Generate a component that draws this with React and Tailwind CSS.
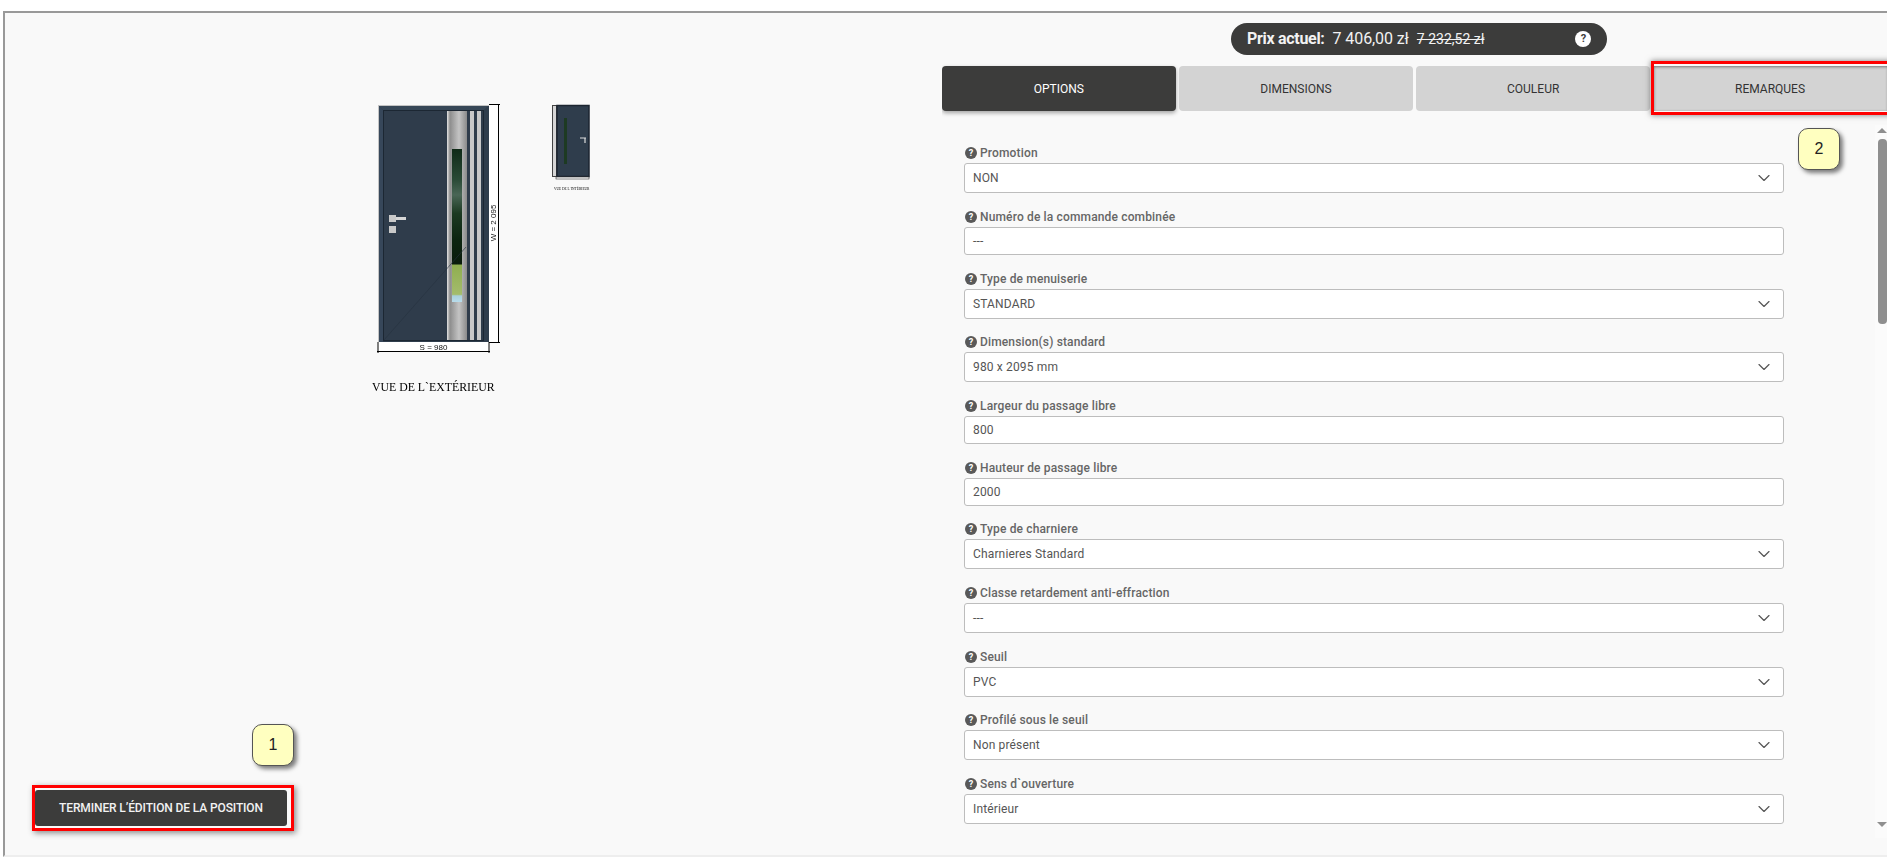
import React from 'react';
import { ChevronDown } from 'lucide-react';

const fields = [
  { label: 'Promotion', value: 'NON', select: true, mb: 'mb-[14px]' },
  { label: 'Numéro de la commande combinée', value: '---', mb: 'mb-[14px]' },
  { label: 'Type de menuiserie', value: 'STANDARD', select: true, mb: 'mb-[13px]' },
  { label: 'Dimension(s) standard', value: '980 x 2095 mm', select: true, mb: 'mb-[14px]' },
  { label: 'Largeur du passage libre', value: '800', mb: 'mb-[14px]' },
  { label: 'Hauteur de passage libre', value: '2000', mb: 'mb-[13px]' },
  { label: 'Type de charniere', value: 'Charnieres Standard', select: true, mb: 'mb-[14px]' },
  { label: 'Classe retardement anti-effraction', value: '---', select: true, mb: 'mb-[14px]' },
  { label: 'Seuil', value: 'PVC', select: true, mb: 'mb-[13px]' },
  { label: 'Profilé sous le seuil', value: 'Non présent', select: true, mb: 'mb-[14px]' },
  { label: 'Sens d`ouverture', value: 'Intérieur', select: true, mb: 'mb-0' },
];

function HelpIcon() {
  return (
    <span className="ml-px flex h-3 w-3 items-center justify-center rounded-full bg-[#595959] text-[9px] font-bold leading-none text-white">?</span>
  );
}

function Field({ label, value, select, mb }) {
  return (
    <div className={mb}>
      <div className="flex h-5 items-center gap-[3px] text-xs font-medium tracking-[0.15px] text-[#666]">
        <HelpIcon />
        <span>{label}</span>
      </div>
      <div className={`flex items-center justify-between rounded-[3px] border border-[#bdbdbd] bg-white pl-2 pr-[9px] text-xs tracking-[0.15px] text-[#555] ${select ? 'h-[30px]' : 'h-[28px]'}`}>
        <span>{value}</span>
        {select && <ChevronDown size={20} strokeWidth={1.4} className="text-[#555]" />}
      </div>
    </div>
  );
}

function Callout({ children, className }) {
  return (
    <div className={`absolute flex h-[42px] w-[42px] items-center justify-center rounded-[10px] border border-[#555] bg-[#ffffc0] font-['Liberation_Sans',sans-serif] text-base text-[#222] shadow-[3px_3px_4px_rgba(0,0,0,0.5)] ${className}`}>
      {children}
    </div>
  );
}

function DoorDrawing() {
  return (
    <svg width="240" height="300" viewBox="370 100 240 300" className="block blur-[0.4px]">
      <defs>
        <linearGradient id="steel" x1="0" x2="1" y1="0" y2="0">
          <stop offset="0" stopColor="#e4e4e4" />
          <stop offset="0.15" stopColor="#8d8d8d" />
          <stop offset="0.6" stopColor="#c4c4c4" />
          <stop offset="1" stopColor="#8a8a8a" />
        </linearGradient>
        <linearGradient id="glass" x1="0" x2="0" y1="0" y2="1">
          <stop offset="0" stopColor="#0f2a17" />
          <stop offset="0.2" stopColor="#2a4a36" />
          <stop offset="0.3" stopColor="#4a6656" />
          <stop offset="0.42" stopColor="#1c3a22" />
          <stop offset="0.6" stopColor="#0c2410" />
          <stop offset="0.75" stopColor="#0a1c0c" />
          <stop offset="0.76" stopColor="#8fae50" />
          <stop offset="0.95" stopColor="#a4bc6c" />
          <stop offset="0.96" stopColor="#a9d0dc" />
          <stop offset="1" stopColor="#b8dcec" />
        </linearGradient>
      </defs>

      {/* main door */}
      <rect x="378" y="105" width="111" height="237" fill="#2f3d4c" />
      <path d="M378 105H489L484 110H383Z" fill="#374757" />
      <path d="M378 105V342H383V110Z" fill="#37475a" />
      <rect x="378" y="105" width="111" height="1" fill="#c4c4c4" />
      <rect x="378" y="105" width="1" height="237" fill="#c4c4c4" />
      <rect x="383.500" y="110.500" width="100" height="230" fill="#2f3c4b" stroke="#1c2733" strokeWidth="1" />
      <rect x="447" y="111" width="20" height="229" fill="url(#steel)" />
      <rect x="470" y="111" width="4" height="229" fill="#c8c8c8" />
      <rect x="477" y="111" width="4" height="229" fill="#c8c8c8" />
      <rect x="452" y="149" width="10" height="153" fill="url(#glass)" />
      <line x1="384" y1="340" x2="466" y2="247" stroke="#263240" strokeWidth="0.6" />
      <rect x="389" y="215" width="7" height="7" fill="#c9c9c9" />
      <rect x="396" y="217" width="10" height="3" fill="#d6d6d6" />
      <rect x="389" y="226" width="7" height="7" fill="#c9c9c9" />

      {/* dimensions */}
      <rect x="489" y="105" width="9" height="237" fill="#fff" />
      <rect x="378" y="342" width="111" height="9" fill="#fff" />
      <path d="M489 104.500H500M498.500 104V343M489 342.500H500M377 351.500H490M378 342V353M489 342V353" stroke="#000" strokeWidth="1" fill="none" />
      <text x="433.500" y="350" textAnchor="middle" fontFamily="Liberation Sans, sans-serif" fontSize="8" fill="#111">S = 980</text>
      <text transform="translate(496 223) rotate(-90)" textAnchor="middle" fontFamily="Liberation Sans, sans-serif" fontSize="8" fill="#111">W = 2 095</text>
      <text x="372" y="391" fontFamily="Liberation Serif, serif" fontSize="11.800" fill="#000">VUE DE L`EXTÉRIEUR</text>

      {/* small door */}
      <rect x="552.500" y="105.500" width="4" height="71" fill="#d6d6d6" stroke="#444" strokeWidth="1" />
      <rect x="557" y="105.500" width="32" height="71" fill="#2f3d4c" stroke="#1c2530" strokeWidth="1.500" />
      <rect x="564" y="118" width="3" height="46" fill="#1d3a22" />
      <path d="M580 138H586M585 138V143" stroke="#ddd" strokeWidth="1.200" fill="none" />
      <rect x="556" y="177" width="33" height="2" fill="#fff" stroke="#333" strokeWidth="0.6" />
      <text x="554" y="190" fontFamily="Liberation Serif, serif" fontSize="3.500" fill="#000">VUE DE L`INTÉRIEUR</text>
    </svg>
  );
}

export default function App() {
  return (
    <div className="h-screen overflow-hidden bg-white pl-[3px] pt-[11px] font-['Roboto',sans-serif]">
      <div className="flex h-[846px] border-b-2 border-l-2 border-t-2 border-b-[#eeeeee] border-l-[#999] border-t-[#999] bg-[#f9f9f9]">
        {/* left column */}
        <div className="relative flex w-[937px] shrink-0 flex-col pl-[27px] pb-[24px]">
          <div className="pl-[338px] pt-[87px]">
            <DoorDrawing />
          </div>
          <Callout className="left-[247px] top-[711px]">1</Callout>
          <div className="mt-auto flex h-[46px] w-[262px] items-center border-[3px] border-[#f00] pb-[1px] pr-[4px] shadow-[2px_2px_6px_rgba(0,0,0,0.45)]">
            <button className="h-[36px] w-full rounded-[3px] bg-[#3c3c3b] text-xs font-medium tracking-[-0.12px] text-[#f2f2f2]">TERMINER L’ÉDITION DE LA POSITION</button>
          </div>
        </div>

        {/* right column */}
        <div className="relative w-[945px] shrink-0 overflow-hidden pt-[10px]">
          <div className="ml-[289px] flex h-8 w-[376px] items-center rounded-full bg-[#3c3c3b] pl-4 text-base text-[#f2f2f2]">
            <span className="font-bold tracking-[-0.3px]">Prix actuel:</span>
            <span className="ml-2 tracking-[-0.1px]">7 406,00 zł</span>
            <span className="ml-2 text-sm line-through">7 232,52 zł</span>
            <span className="ml-[91px] flex h-4 w-4 items-center justify-center rounded-full bg-white text-[11px] font-bold text-[#3c3c3b]">?</span>
          </div>

          <div className="mt-[11px] flex h-[45px] text-xs">
            <div className="flex w-[234px] items-center justify-center rounded bg-[#3c3c3b] text-white shadow-[0_2px_4px_rgba(0,0,0,0.35)]">OPTIONS</div>
            <div className="ml-[3px] flex w-[235px] items-center justify-center rounded bg-[#d3d3d3] text-[#333]">DIMENSIONS</div>
            <div className="ml-[3px] flex w-[234px] items-center justify-center rounded bg-[#d3d3d3] text-[#333]">COULEUR</div>
            <div className="ml-[3px] flex w-[234px] shrink-0 items-center justify-center bg-[#d3d3d3] text-[#333] shadow-[inset_1px_1px_3px_rgba(0,0,0,0.45)]">REMARQUES</div>
          </div>

          <div className="mt-[14px] flex h-[713px]">
            <div className="w-[933px] overflow-hidden pl-[22px] pr-[91px] pt-[18px]">
              {fields.map((field) => (
                <Field key={field.label} {...field} />
              ))}
            </div>
            <div className="flex w-[12px] flex-col items-end bg-[#fbfbfb] pt-[3px]">
              <div className="h-0 w-0 border-x-[5px] border-b-[5px] border-x-transparent border-b-[#8f8f8f]" />
              <div className="mt-[6px] h-[185px] w-[9px] rounded-[4px] bg-[#8f8f8f]" />
              <div className="mt-auto mb-[11px] h-0 w-0 border-x-[5px] border-t-[5px] border-x-transparent border-t-[#8f8f8f]" />
            </div>
          </div>

          {/* red highlight over the last tab */}
          <div className="absolute left-[709px] top-[48px] h-[54px] w-[260px] border-[3px] border-[#f00] shadow-[0_0_6px_rgba(0,0,0,0.5)]" />
          <Callout className="left-[856px] top-[115px]">2</Callout>
        </div>
      </div>
    </div>
  );
}
